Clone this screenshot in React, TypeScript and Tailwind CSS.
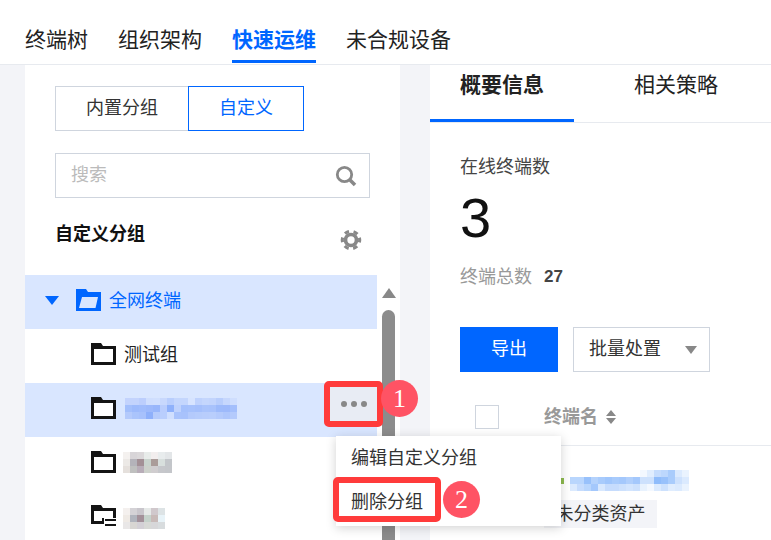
const cjk = 'font-["Liberation_Sans","Noto_Sans_CJK_SC",sans-serif]';

function Folder({ color = '#141414' }: { color?: string }) {
  return (
    <svg width="25" height="22" viewBox="0 0 25 22" className="shrink-0">
      <path d="M0 0h10l2 3h13v19H0z" fill={color} />
      <rect x="3" y="6" width="19" height="13" fill="#fff" />
    </svg>
  );
}

function Mosaic({ rows }: { rows: string[][] }) {
  return (
    <div className="flex flex-col">
      {rows.map((r, i) => (
        <div key={i} className="flex">
          {r.map((c, j) => (
            <div key={j} className="size-[7px]" style={{ backgroundColor: c }} />
          ))}
        </div>
      ))}
    </div>
  );
}

const blueRows = [
  ['#c3d3fd', '#c3d3fd', '#bccefd', '#cfdefe', '#d0dffe', '#c8d8fd', '#b9cefd', '#c4d6fd', '#c4d6fd', '#d7e4ff', '#bfd2fd', '#c4d6fd', '#c2d4fd', '#b8cdfc', '#c6d7fd', '#cfdefe'],
  ['#a3bffc', '#9dbafc', '#a0bcfc', '#9db9fb', '#98b6fb', '#b9cdfd', '#8fb1fb', '#bfd2fd', '#a4c0fc', '#a6c1fc', '#a4bffc', '#a9c3fc', '#a8c2fc', '#9dbafb', '#9db9fb', '#a4bffc'],
  ['#b4cafc', '#aac4fc', '#a7c1fc', '#8eb0fb', '#b5cbfc', '#b9cefd', '#d0dffe', '#a9c3fc', '#a8c2fc', '#b4cafc', '#b6ccfc', '#b8cdfc', '#b9cefc', '#b4cafc', '#aec6fc', '#b4cafc'],
];
const gray1 = [
  ['#f4f1ef', '#d8d5d8', '#dbd8da', '#e8ecea', '#f2eeee', '#e8eced', '#e3e6e8'],
  ['#ece9e6', '#b4b3ba', '#a39096', '#c9d3cd', '#aa9c99', '#d8dfdd', '#c3c6ca'],
  ['#e5e0dc', '#bfc0bf', '#b8adb8', '#cdd1cb', '#d0cdcf', '#c6c7cb', '#c4c6ca'],
];
const gray2 = [
  ['#f4f0ee', '#d4d2d6', '#c9c6cc', '#e6e9e8', '#d0c8cc', '#dde3e5'],
  ['#efeae5', '#b0b4bd', '#a3919a', '#c5d2cb', '#c8bab8', '#e8f3f8'],
  ['#e9e7e7', '#d8d6d3', '#d3d0d6', '#d7d9d6', '#d7d7d9', '#d8dcde'],
];
const nameRows = [
  ['#ffffff', '#ffffff', '#ffffff', '#ffffff', '#ffffff', '#ffffff', '#ffffff', '#ffffff', '#ffffff', '#ffffff', '#f3f8ff', '#e0edfe', '#c5dcfd', '#bcd7fd', '#a9ccfc', '#dbeafe', '#eaf3fe'],
  ['#b9d6fd', '#b9d6fd', '#98c1fb', '#b4d2fc', '#a8cbfc', '#a0c6fc', '#a8cbfc', '#a4c8fc', '#b0cffc', '#a4c8fc', '#cde1fd', '#cde1fd', '#8fbcfb', '#98c1fb', '#a9ccfc', '#cde1fd', '#dbeafe'],
  ['#dbeafe', '#c6dcfd', '#b9d6fd', '#a4c8fc', '#d8e8fe', '#c6dcfd', '#c6dcfd', '#cde1fd', '#d3e5fe', '#cde1fd', '#e8f2fe', '#f3f8ff', '#dbeafe', '#cde1fd', '#e0edfe', '#dbeafe', '#eaf3fe'],
];

function Badge({ n }: { n: number }) {
  return (
    <div className='flex size-[37px] items-center justify-center rounded-full bg-[#ff5364] font-["Liberation_Serif",serif] text-[26px] text-white'>
      {n}
    </div>
  );
}

export default function App() {
  return (
    <div className={`relative flex h-[540px] w-[771px] flex-col overflow-hidden bg-[#f3f4f8] ${cjk}`}>
      {/* top tabs */}
      <div className="flex h-[65px] shrink-0 gap-[30px] border-b border-[#e7eaef] bg-white pl-[25px] text-[21px] text-[#222]">
        {['终端树', '组织架构', '快速运维', '未合规设备'].map((t, i) => (
          <div
            key={t}
            className={`flex h-[63px] items-end border-b-[3px] pb-[6px] leading-[28px] ${
              i === 2 ? 'border-[#0066ff] font-bold text-[#0066ff]' : 'border-transparent'
            }`}
          >
            {t}
          </div>
        ))}
      </div>

      <div className="flex min-h-0 flex-1">
        {/* left panel */}
        <div className="ml-[25px] w-[375px] shrink-0 bg-white">
          <div className="ml-[30px] mt-[21px] flex h-[45px] w-[249px] text-[18px]">
            <div className="flex w-[133px] items-center justify-center border border-r-0 border-[#cfd5de] text-[#333]">内置分组</div>
            <div className="flex w-[116px] items-center justify-center border border-[#0066ff] text-[#0066ff]">自定义</div>
          </div>
          <div className="ml-[30px] mt-[22px] flex h-[45px] w-[315px] items-center justify-between border border-[#cfd5de] pl-[15px] pr-[12px] text-[18px] text-[#bbb]">
            <span>搜索</span>
            <svg width="22" height="22" viewBox="0 0 22 22" fill="none" stroke="#888">
              <circle cx="9.5" cy="9.5" r="7.2" strokeWidth="2.8" />
              <path d="M15 15l5 5" strokeWidth="3.6" />
            </svg>
          </div>
          <div className="ml-[30px] mr-[38px] flex h-[59px] items-start justify-between">
            <span className="mt-[24px] text-[18px] font-bold leading-[24px] text-[#111]">自定义分组</span>
            <svg width="22" height="24" viewBox="0 0 24 24" fill="none" stroke="#888" className="mt-[30px]">
              <circle cx="12" cy="12" r="6" strokeWidth="4" />
              <circle cx="12" cy="12" r="9.5" strokeWidth="3.4" strokeDasharray="5 4.95" transform="rotate(-15 12 12)" />
            </svg>
          </div>

          <div className="mt-[18px] flex">
            <div className="w-[352px] shrink-0 text-[18px]">
              <div className="flex h-[54px] items-center bg-[#d9e6ff] pb-[4px] pl-[20px] text-[#0066ff]">
                <svg width="14" height="9" viewBox="0 0 14 9" className="mr-[17px]">
                  <path d="M0 0h14L7 9z" fill="#0066ff" />
                </svg>
                <svg width="25" height="22" viewBox="0 0 25 22" className="mr-[8px] shrink-0">
                  <path d="M0 0h10l2 3h13v19H0z" fill="#0066ff" />
                  <path d="M3 19L6 8h16l-2.5 11z" fill="#d9e6ff" />
                </svg>
                <span className="mt-[2px]">全网终端</span>
              </div>
              <div className="flex h-[54px] items-center gap-[8px] pb-[4px] pl-[66px] text-[#222]">
                <Folder />
                <span className="mt-[2px]">测试组</span>
              </div>
              <div className="flex h-[54px] items-center gap-[9px] bg-[#d9e6ff] pb-[4px] pl-[66px]">
                <Folder />
                <Mosaic rows={blueRows} />
              </div>
              <div className="flex h-[54px] items-center gap-[7px] pb-[4px] pl-[66px]">
                <Folder />
                <Mosaic rows={gray1} />
              </div>
              <div className="flex h-[54px] items-center gap-[7px] pb-[4px] pl-[66px]">
                <svg width="25" height="22" viewBox="0 0 25 22" className="shrink-0">
                  <path d="M0 0h10l2 3h13v10H13v6H0z" fill="#141414" />
                  <rect x="3" y="6" width="19" height="7" fill="#fff" />
                  <rect x="3" y="13" width="8" height="3" fill="#fff" />
                  <path d="M14 15h11M14 20h11" stroke="#141414" strokeWidth="2" />
                </svg>
                <div className="mt-[4px]">
                  <Mosaic rows={gray2} />
                </div>
              </div>
            </div>
            {/* scrollbar */}
            <div className="ml-[5px] flex w-[13px] flex-col items-center">
              <svg width="14" height="10" viewBox="0 0 14 10" className="mt-[13px]">
                <path d="M7 0l7 10H0z" fill="#888" />
              </svg>
              <div className="mt-[12px] w-[13px] flex-1 rounded-t-full bg-[#8c8c8c]" />
            </div>
          </div>
        </div>

        {/* right panel */}
        <div className="ml-[30px] flex-1 bg-white">
          <div className="flex h-[58px] border-b border-[#e7eaef] text-[21px]">
            <div className="w-[144px] border-b-[3px] border-[#0066ff] pl-[30px] pt-[6px] font-bold leading-[28px] text-[#222]">概要信息</div>
            <div className="pl-[60px] pt-[6px] leading-[28px] text-[#222]">相关策略</div>
          </div>
          <div className="px-[30px]">
            <div className="mt-[32px] text-[18px] leading-[24px] text-[#444]">在线终端数</div>
            <div className="mt-[11px] text-[56px] leading-[56px] text-[#111]">3</div>
            <div className="mt-[19px] flex items-center gap-[12px] text-[18px] leading-[24px] text-[#999]">
              终端总数
              <span className="text-[17px] font-bold text-[#444]">27</span>
            </div>
            <div className="mt-[38px] flex gap-[15px] text-[18px]">
              <div className="flex h-[45px] w-[98px] items-center justify-center bg-[#0066ff] text-white">导出</div>
              <div className="flex h-[45px] w-[137px] items-center justify-between border border-[#cfd5de] pl-[15px] pr-[12px] text-[#333]">
                批量处置
                <svg width="12" height="8" viewBox="0 0 12 8">
                  <path d="M0 0h12L6 8z" fill="#888" />
                </svg>
              </div>
            </div>
          </div>
          <div className="flex h-[74px] items-center border-b border-[#e7eaef] pl-[45px] pt-[17px]">
            <div className="size-[24px] border border-[#cfd5de]" />
            <span className="ml-[45px] text-[18px] font-bold text-[#999]">终端名</span>
            <svg width="12" height="14" viewBox="0 0 12 14" className="ml-[7px]">
              <path d="M6 0l5 6H1zM6 14L1 8h10z" fill="#888" />
            </svg>
          </div>
          <div className="ml-[131px] mt-[24px] flex w-fit items-center">
            <div className="mr-[6px] h-[6px] w-[3px] bg-[#8dbb4f]" />
            <Mosaic rows={nameRows} />
          </div>
          <div className="ml-[114px] mt-[9px] flex h-[28px] w-[113px] items-center justify-center bg-[#f3f4f8] text-[18px] text-[#333]">未分类资产</div>
        </div>
      </div>

      {/* ellipsis button highlight */}
      <div className="absolute left-[324px] top-[381px] flex h-[46px] w-[59px] items-center justify-center rounded-[5px] border-[6px] border-[#ff3b3b] bg-[#e8ecf4]">
        <svg width="26" height="6" viewBox="0 0 26 6">
          <circle cx="3" cy="3" r="3" fill="#888" />
          <circle cx="13" cy="3" r="3" fill="#888" />
          <circle cx="23" cy="3" r="3" fill="#888" />
        </svg>
      </div>
      <div className="absolute left-[381px] top-[380px]">
        <Badge n={1} />
      </div>

      {/* context menu */}
      <div className="absolute left-[336px] top-[436px] h-[90px] w-[225px] bg-white pl-[15px] pt-[9px] text-[18px] leading-[26px] text-[#333] shadow-[0_2px_10px_rgba(0,0,0,0.18)]">
        编辑自定义分组
      </div>
      <div className="absolute left-[333px] top-[477px] flex h-[45px] w-[108px] items-center rounded-[5px] border-[6px] border-[#ff3b3b] bg-white pl-[12px] pt-[6px] text-[18px] text-[#333]">
        删除分组
      </div>
      <div className="absolute left-[443px] top-[481px]">
        <Badge n={2} />
      </div>
    </div>
  );
}
